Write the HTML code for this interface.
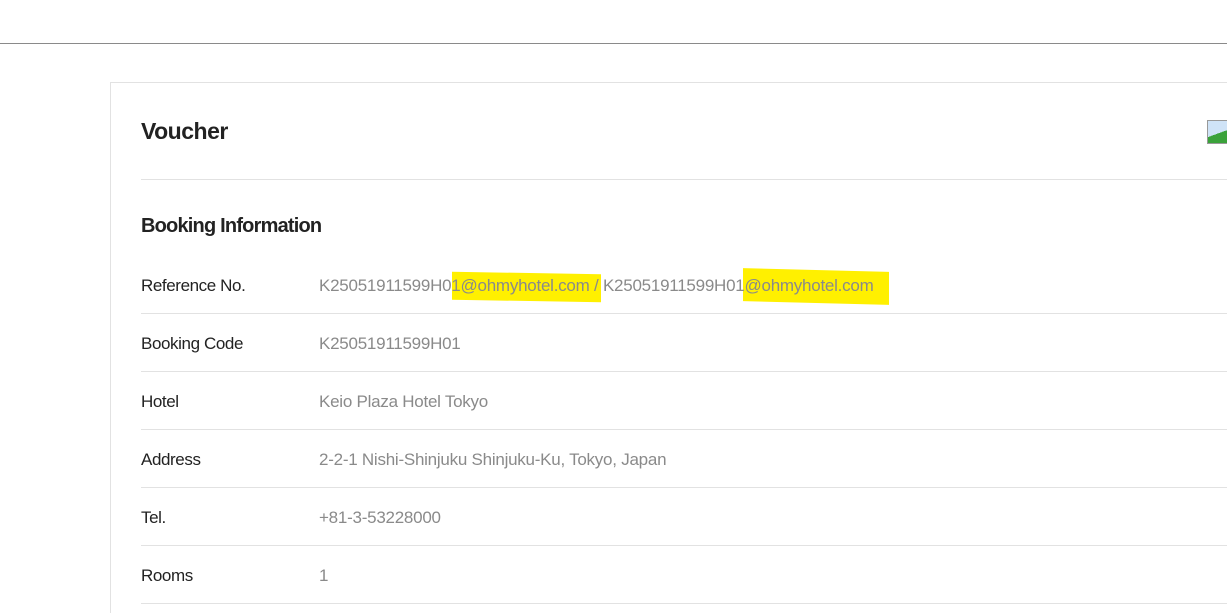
<!DOCTYPE html>
<html><head><style>
html,body{margin:0;width:1227px;height:613px;overflow:hidden;background:#fff;font-family:"Liberation Sans",sans-serif;position:relative}
.top{position:absolute;left:0;top:43px;width:1227px;height:1px;background:#8a8a8a}
.card{position:absolute;left:110px;top:82px;width:1117px;height:530px;border:1px solid #e2e2e2;border-right:none;border-bottom:none}
.t{position:absolute;left:141px;top:118px;font-size:23px;font-weight:bold;color:#222;letter-spacing:-0.5px}
.sep{position:absolute;left:141px;width:1086px;height:1px;background:#e2e2e2}
.h{position:absolute;left:141px;top:215px;font-size:20px;font-weight:bold;color:#222;letter-spacing:-0.8px}
.l{position:absolute;left:141px;font-size:17px;color:#222;letter-spacing:-0.4px}
.v{position:absolute;left:319px;font-size:17px;color:#8a8a8a;letter-spacing:-0.25px;white-space:nowrap}
.hl{position:absolute;background:#fff000}
.img{position:absolute;left:1207px;top:120px;width:20px;height:22px;border:1px solid #999;border-right:none;background:linear-gradient(160deg,#cfe3f7 55%,#3aa23a 55%)}
</style></head><body>
<div class="top"></div>
<div class="card"></div>
<div class="t">Voucher</div>
<div class="img"></div>
<div class="sep" style="top:179px"></div>
<div class="h">Booking Information</div>
<div class="hl" style="left:452px;top:273px;width:149px;height:28px;transform:skewY(1deg)"></div>
<div class="hl" style="left:743px;top:270px;width:146px;height:33px;transform:skewY(1.5deg)"></div>
<div class="l" style="top:276px">Reference No.</div><div class="v" style="top:276px">K25051911599H01@ohmyhotel.com / K25051911599H01@ohmyhotel.com</div>
<div class="sep" style="top:313px"></div>
<div class="l" style="top:334px">Booking Code</div><div class="v" style="top:334px">K25051911599H01</div>
<div class="sep" style="top:371px"></div>
<div class="l" style="top:392px">Hotel</div><div class="v" style="top:392px">Keio Plaza Hotel Tokyo</div>
<div class="sep" style="top:429px"></div>
<div class="l" style="top:450px">Address</div><div class="v" style="top:450px">2-2-1 Nishi-Shinjuku Shinjuku-Ku, Tokyo, Japan</div>
<div class="sep" style="top:487px"></div>
<div class="l" style="top:508px">Tel.</div><div class="v" style="top:508px">+81-3-53228000</div>
<div class="sep" style="top:545px"></div>
<div class="l" style="top:566px">Rooms</div><div class="v" style="top:566px">1</div>
<div class="sep" style="top:603px"></div>
</body></html>
